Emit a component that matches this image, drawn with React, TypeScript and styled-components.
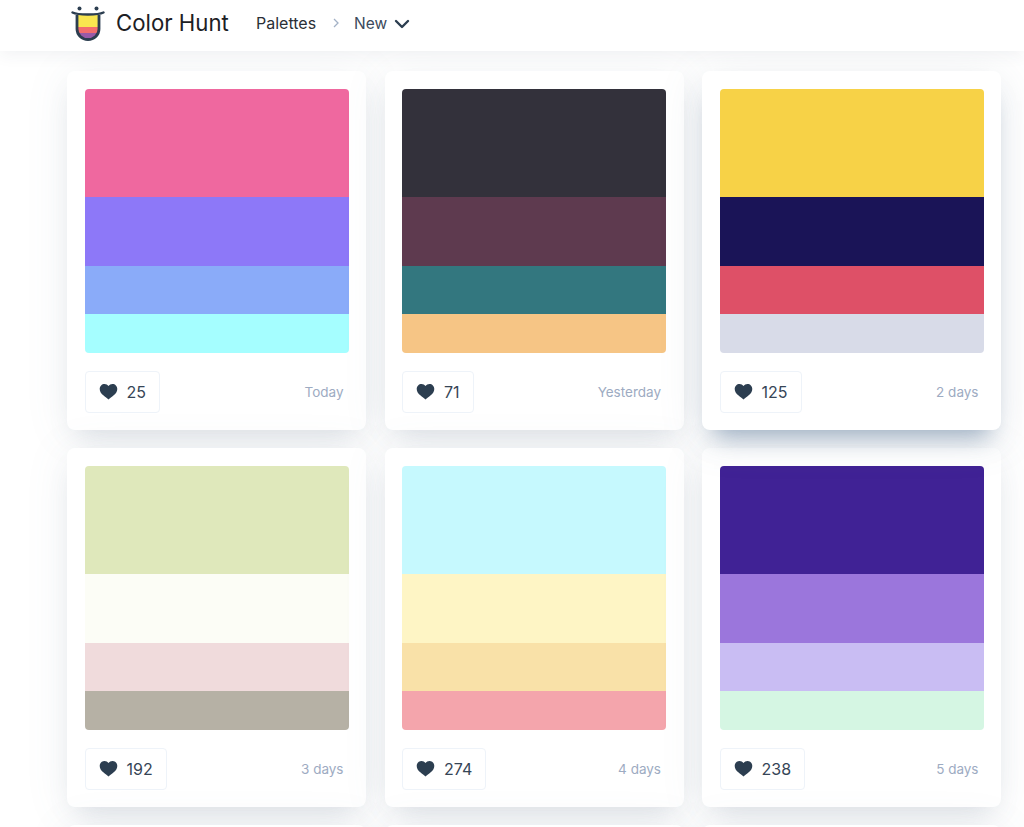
import React from 'react';
import styled, { createGlobalStyle } from 'styled-components';

const palettes = [
  { likes: 25, date: 'Today', colors: ['#ef689f', '#8d78f8', '#8aabf9', '#a5feff'] },
  { likes: 71, date: 'Yesterday', colors: ['#33313b', '#5e3a4f', '#33777f', '#f6c585'] },
  { likes: 125, date: '2 days', colors: ['#f7d247', '#1a1457', '#de5067', '#d8dbe8'], raised: true },
  { likes: 192, date: '3 days', colors: ['#dfe8bb', '#fcfdf6', '#f0dbdc', '#b6b1a5'] },
  { likes: 274, date: '4 days', colors: ['#c6f9fe', '#fef5c5', '#f9e1a8', '#f4a5ac'] },
  { likes: 238, date: '5 days', colors: ['#402295', '#9b76dc', '#c9bdf3', '#d5f6e3'] },
];

// the next row only peeks in at the bottom of the window
const nextRow = ['a', 'b', 'c'];

const App: React.FC = () => (
  <Page>
    <GlobalStyle />
    <Header>
      <Logo viewBox="0 0 34 38" aria-hidden="true">
        <clipPath id="cup">
          <path d="M6 10h22v15a11 10.500 0 0 1-22 0z" />
        </clipPath>
        <g clipPath="url(#cup)">
          <rect x="5" y="10" width="24" height="13" fill="#f9e64f" />
          <rect x="5" y="23" width="24" height="6" fill="#f26d6d" />
          <rect x="5" y="29" width="24" height="8" fill="#9a5aa8" />
        </g>
        <path d="M6 11v14a11 10.500 0 0 0 22 0V11" fill="none" stroke="#2c3e50" strokeWidth="2.800" />
        <path d="M1.500 8.500c3 1.500 7 2 15.500 2s12.500-.5 15.500-2" fill="none" stroke="#2c3e50" strokeWidth="2.400" strokeLinecap="round" />
        <circle cx="8.500" cy="4.500" r="2" fill="#2c3e50" />
        <circle cx="25.500" cy="4.500" r="2" fill="#2c3e50" />
      </Logo>
      <Brand>Color Hunt</Brand>
      <NavLink>Palettes</NavLink>
      <Crumb viewBox="0 0 8 12" aria-hidden="true">
        <path d="M2 2l4 4-4 4" fill="none" stroke="#a3b1c6" strokeWidth="1.300" />
      </Crumb>
      <FilterLabel>New</FilterLabel>
      <Chevron viewBox="0 0 16 10" aria-hidden="true">
        <path d="M2 2l6 6 6-6" fill="none" stroke="#2c3e50" strokeWidth="2.400" strokeLinecap="round" strokeLinejoin="round" />
      </Chevron>
    </Header>
    <Grid>
      {palettes.map((palette) => (
        <Card key={palette.date} $raised={palette.raised}>
          <Swatches>
            {palette.colors.map((color, i) => (
              <Stripe key={i} $index={i} $color={color} />
            ))}
          </Swatches>
          <Footer>
            <LikeButton>
              <Heart viewBox="0 0 20 18" aria-hidden="true">
                <path d="M10 17.500C8.500 16.200 6.500 14.800 4.500 13 2.200 11 .7 9 .7 6.300.7 3.200 3 1 5.800 1 7.500 1 9 1.800 10 3.300 11 1.800 12.500 1 14.200 1 17 1 19.300 3.200 19.300 6.300c0 2.700-1.500 4.700-3.800 6.700-2 1.800-4 3.200-5.500 4.500z" fill="#2c3e50" />
              </Heart>
              <LikeCount>{palette.likes}</LikeCount>
            </LikeButton>
            <DateText>{palette.date}</DateText>
          </Footer>
        </Card>
      ))}
      {nextRow.map((id) => (
        <Card key={id} />
      ))}
    </Grid>
  </Page>
);

const GlobalStyle = createGlobalStyle`
  html, body {
    margin: 0;
    padding: 0;
    background: #fff;
  }
  * {
    box-sizing: border-box;
  }
`;

const Page = styled.div`
  height: 827px;
  overflow: hidden;
  font-family: Inter, "Noto Sans", sans-serif;
  color: #2c3e50;
`;

const Header = styled.header`
  position: relative;
  z-index: 2;
  height: 51px;
  padding: 4px 0 10px 71px;
  display: flex;
  align-items: center;
  background: #fff;
  box-shadow: 0 3px 16px rgba(44, 62, 80, 0.07);
`;

const Logo = styled.svg`
  width: 34px;
  height: 38px;
  margin-right: 11px;
`;

const Brand = styled.div`
  width: 140px;
  font-size: 22.2px;
  color: #1c2024;
`;

const NavLink = styled.div`
  margin-top: 1px;
  font-size: 16px;
  color: #2a2f36;
`;

const Crumb = styled.svg`
  width: 8px;
  height: 12px;
  margin: 1px 14px 0 16px;
`;

const FilterLabel = styled.div`
  margin-top: 1px;
  font-size: 15.5px;
  color: #3c4a5c;
`;

const Chevron = styled.svg`
  width: 16px;
  height: 10px;
  margin: 2px 0 0 7px;
`;

const Grid = styled.main`
  width: 934px;
  margin: 20px 0 0 67px;
  display: grid;
  grid-template-columns: repeat(3, 1fr);
  column-gap: 18.5px;
  row-gap: 18px;
`;

const Card = styled.article<{ $raised?: boolean }>`
  position: relative;
  z-index: ${({ $raised }) => ($raised ? 1 : 0)};
  height: 359px;
  padding: 18px 17.500px;
  background: #fff;
  border-radius: 8px;
  box-shadow: ${({ $raised }) => ($raised
    ? '0 18px 22px -12px rgba(100, 128, 160, 0.6), 0 8px 44px rgba(110, 128, 150, 0.16)'
    : '0 14px 26px -10px rgba(110, 125, 145, 0.2), 0 4px 44px rgba(110, 125, 145, 0.1)')};
`;

const Swatches = styled.div`
  height: 264px;
  display: flex;
  flex-direction: column;
  border-radius: 4px;
  overflow: hidden;
`;

const stripeHeights = [108, 69, 48, 39];

const Stripe = styled.div<{ $index: number; $color: string }>`
  height: ${({ $index }) => stripeHeights[$index]}px;
  background: ${({ $color }) => $color};
`;

const Footer = styled.div`
  margin-top: 18px;
  display: flex;
  justify-content: space-between;
  align-items: center;
`;

const LikeButton = styled.div`
  height: 42px;
  padding: 0 13px 1px 13px;
  display: flex;
  align-items: center;
  gap: 9px;
  background: #fff;
  border: 1.5px solid #eef3f9;
  border-radius: 4px;
`;

const Heart = styled.svg`
  width: 19px;
  height: 17px;
`;

const LikeCount = styled.span`
  font-size: 16px;
  color: #364556;
`;

const DateText = styled.span`
  margin: 0 5px 0 0;
  font-size: 13.5px;
  color: #9dabc2;
`;

export default App;
